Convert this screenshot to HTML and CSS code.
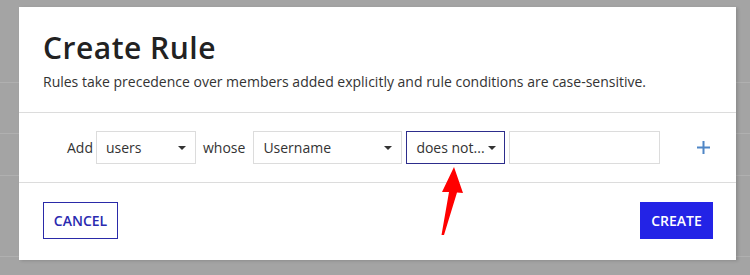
FILE: index.html
```html
<!DOCTYPE html>
<html lang="en">
<head>
  <meta charset="UTF-8" />
  <title>Create Rule</title>
  <link rel="stylesheet" href="styles.css">
</head>
<body>
  <!-- page behind the dialog -->
  <div class="backdrop">
    <div class="bg-row r1"></div>
    <div class="bg-row r2"></div>
    <div class="bg-row r3"></div>
    <div class="bg-row r4"></div>
  </div>

  <div class="modal">
    <div class="modal-head">
      <h1>Create Rule</h1>
      <p class="notice">Rules take precedence over members added explicitly and rule conditions are case-sensitive.</p>
    </div>

    <div class="rule-row">
      <span class="word add">Add</span>
      <div class="select w-users"><span>users</span><i class="caret"></i></div>
      <span class="word whose">whose</span>
      <div class="select w-field"><span>Username</span><i class="caret"></i></div>
      <div class="select w-op focused"><span>does not...</span><i class="caret"></i></div>
      <div class="text-input"></div>
      <button class="add-btn" aria-label="Add condition">
        <svg width="13" height="13" viewBox="0 0 13 13"><path d="M6.5 0v13M0 6.5h13" stroke="#4f86c6" stroke-width="2"/></svg>
      </button>
    </div>

    <div class="modal-foot">
      <button class="btn btn-outline">CANCEL</button>
      <button class="btn btn-primary">CREATE</button>
    </div>

    <svg class="arrow" width="24" height="72" viewBox="0 0 24 72">
      <path d="M13 0 L22 26 L16 25.5 L3 68 L0.5 68 L8 25 L1 25 Z" fill="#ff0000"/>
    </svg>
  </div>
</body>
</html>
```

FILE: styles.css
```css
* {
  box-sizing: border-box;
}
body {
  margin: 0;
  background: #a4a4a4;
  font-family: 'Open Sans', 'Noto Sans', sans-serif;
  color: #333;
  width: 750px;
  height: 275px;
  overflow: hidden;
  position: relative;
}
.bg-row {
  border-bottom: 1px solid #b0b0b0;
}
.r1 { height: 83px; }
.r2 { height: 51px; }
.r3 { height: 42px; }
.r4 { height: 81px; }

.modal {
  position: absolute;
  left: 19px;
  top: 7px;
  width: 717px;
  height: 253px;
  background: #fff;
  box-shadow: 2px 1px 3px rgba(0,0,0,0.15);
}
.modal-head {
  padding: 22px 24px 0 24px;
  height: 106px;
  border-bottom: 1px solid #dcdcdc;
}
h1 {
  margin: 0;
  font-size: 30px;
  line-height: 38px;
  font-weight: 600;
  letter-spacing: 0.5px;
  color: #222;
}
.notice {
  margin: 5px 0 0 0;
  font-size: 14px;
  line-height: 20px;
  color: #333;
}
.rule-row {
  display: flex;
  align-items: center;
  height: 70px;
  padding: 0 0 0 48px;
  border-bottom: 1px solid #dcdcdc;
}
.word {
  font-size: 14px;
  color: #333;
}
.add { margin-right: 3px; }
.whose { margin: 0 8px 0 3px; }
.select {
  height: 33px;
  border: 1px solid #dcdcdc;
  display: flex;
  align-items: center;
  justify-content: space-between;
  padding: 0 9px 0 9px;
  font-size: 14px;
  color: #333;
  margin-right: 4px;
  white-space: nowrap;
}
.select.focused {
  border-color: #2d2d8c;
}
.w-users { width: 100px; }
.w-field { width: 149px; }
.w-op { width: 99px; padding-right: 8px; }
.caret {
  width: 0;
  height: 0;
  border-left: 4px solid transparent;
  border-right: 4px solid transparent;
  border-top: 4px solid #333;
}
.text-input {
  width: 151px;
  height: 33px;
  border: 1px solid #dcdcdc;
}
.add-btn {
  margin-left: 37px;
  background: none;
  border: none;
  padding: 0;
  display: flex;
}
.modal-foot {
  display: flex;
  justify-content: space-between;
  align-items: center;
  padding: 19px 23px 0 24px;
}
.btn {
  height: 37px;
  font-family: 'Open Sans', sans-serif;
  font-size: 14px;
  font-weight: 600;
  padding: 0;
}
.btn-outline {
  width: 75px;
  background: #fff;
  border: 1px solid #2a2aa8;
  color: #2a2ab0;
}
.btn-primary {
  width: 73px;
  background: #2323e6;
  border: none;
  color: #fff;
}
.arrow {
  position: absolute;
  left: 422px;
  top: 160px;
}
```
